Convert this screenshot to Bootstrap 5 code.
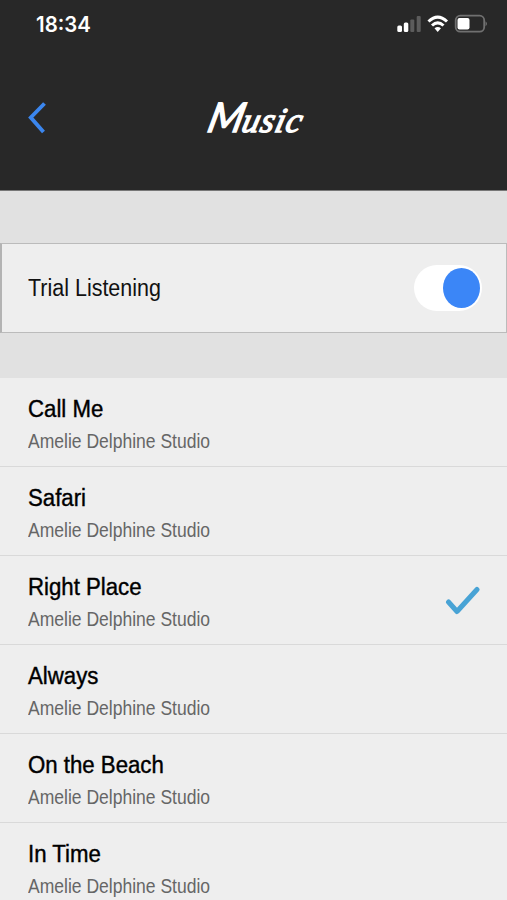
<!DOCTYPE html>
<html lang="en">
<head>
<meta charset="utf-8">
<meta name="viewport" content="width=device-width, initial-scale=1">
<title>Music</title>
<link href="https://cdn.jsdelivr.net/npm/bootstrap@5.3.0/dist/css/bootstrap.min.css" rel="stylesheet">
<style>
body{background:#e1e1e1;font-family:"Liberation Sans",Arial,sans-serif;height:900px;overflow:hidden;color:#111}
.top-area{background:#282828;height:191px;border-bottom:1px solid #777}
.status{height:48px;padding:0 19px 0 36px}
.clock{font:600 21.5px/48px Inter,sans-serif;color:#fff;transform:scaleX(.95);transform-origin:0 50%}
.title-bar{height:142px;padding:0 28px}
.script-title{font:italic 400 35px/48px "Liberation Serif",serif;color:#fff;margin:0;-webkit-text-stroke:1.3px #fff;letter-spacing:1px;transform:translateX(2px) skewX(-14deg)}
.script-title::first-letter{font-family:Lato,sans-serif;font-size:41px;letter-spacing:-1px}
.trial{height:90px;margin-top:52px;background:#eee;border:1px solid #bbb;border-left-width:2px;border-left-color:#b3b3b3;padding:0 24px 0 26px}
.squeeze{display:inline-block;transform-origin:0 50%;white-space:nowrap}
.trial-label{font-size:23.5px;line-height:28px;transform:scaleX(.914)}
.switch-track{width:68px;height:46px;background:#fff;border-radius:23px;padding:3px 2px 3px 0}
.switch-knob{width:37px;height:40px;border-radius:50%;background:#3b86f7}
.songs{margin-top:45px}
.songs .list-group-item{height:89px;background:#eee;border-color:#d9d9d9;padding:17px 26px 0 28px;color:#000}
.song{font-size:23.5px;line-height:28px;transform:scaleX(.945);-webkit-text-stroke:.4px #000}
.artist{font-size:19.5px;line-height:24px;margin-top:5px;color:#666;transform:scaleX(.898)}
</style>
<script src="https://cdn.jsdelivr.net/npm/bootstrap@5.3.0/dist/js/bootstrap.bundle.min.js"></script>
</head>
<body>
<header class="top-area">
  <div class="status d-flex justify-content-between align-items-center">
    <span class="clock">18:34</span>
    <svg width="92" height="20" viewBox="396 14 92 20" fill="none">
      <g fill="#fff"><rect x="397.300" y="25.500" width="4.700" height="6.500" rx="1.500"/><rect x="403.800" y="22.500" width="4.500" height="9.500" rx="1.500"/><g fill="#5c5c5c"><rect x="410.300" y="19.500" width="4" height="12.500" rx="1"/><rect x="416.700" y="16" width="4" height="16" rx="1"/></g></g>
      <g stroke="#fff" stroke-width="3"><path d="M428.500 21.500Q437.700 12.700 447 21.500"/><path d="M432 25.500Q437.700 20.200 443.500 25.500"/></g>
      <path d="M434.500 28.200Q437.700 25.800 441 28.200L437.700 32Z" fill="#fff"/>
      <rect x="455.700" y="15.700" width="28.500" height="16" rx="4.500" stroke="#707070" stroke-width="1.800"/>
      <rect x="457.500" y="18" width="12" height="11.500" rx="2" fill="#fff"/>
      <path d="M485.500 21.200Q488.500 23.700 485.500 26.200Z" fill="#707070"/>
    </svg>
  </div>
  <div class="title-bar d-flex justify-content-between align-items-center">
    <svg width="20" height="34" viewBox="0 1 20 34" fill="none" stroke="#3b86ee" stroke-width="3.900"><path d="M16.500 2.500L2.800 16.500L15.500 31"/></svg>
    <h1 class="script-title">Music</h1>
    <span style="width:18px"></span>
  </div>
</header>
<section class="trial d-flex justify-content-between align-items-center">
  <span class="squeeze trial-label">Trial Listening</span>
  <div class="switch-track d-flex justify-content-end" role="switch" aria-checked="true"><div class="switch-knob"></div></div>
</section>
<ul class="list-group list-group-flush songs">
  <li class="list-group-item"><div class="squeeze song">Call Me</div><br><div class="squeeze artist">Amelie Delphine Studio</div></li>
  <li class="list-group-item"><div class="squeeze song">Safari</div><br><div class="squeeze artist">Amelie Delphine Studio</div></li>
  <li class="list-group-item d-flex justify-content-between">
    <div><div class="squeeze song">Right Place</div><br><div class="squeeze artist">Amelie Delphine Studio</div></div>
    <svg class="mt-2" width="36" height="34" viewBox="445 581 36 34" fill="none" stroke="#48a3d5" stroke-width="5" stroke-linecap="round" stroke-linejoin="round"><path d="M448.500 602L457 611.500L477 589.500"/></svg>
  </li>
  <li class="list-group-item"><div class="squeeze song">Always</div><br><div class="squeeze artist">Amelie Delphine Studio</div></li>
  <li class="list-group-item"><div class="squeeze song">On the Beach</div><br><div class="squeeze artist">Amelie Delphine Studio</div></li>
  <li class="list-group-item"><div class="squeeze song">In Time</div><br><div class="squeeze artist">Amelie Delphine Studio</div></li>
</ul>
</body>
</html>
